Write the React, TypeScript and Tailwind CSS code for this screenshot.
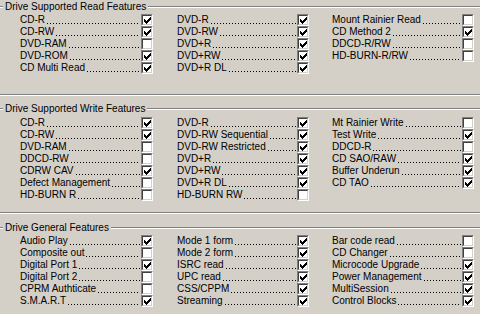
import React from 'react'

type Item = [string, boolean]

const groups: { title: string; top: string; rowsTop: string; pad: string; cols: Item[][] }[] = [
  {
    title: 'Drive Supported Read Features',
    top: 'mt-0',
    rowsTop: 'mt-0',
    pad: 'pb-[20px]',
    cols: [
      [['CD-R', true], ['CD-RW', true], ['DVD-RAM', false], ['DVD-ROM', true], ['CD Multi Read', true]],
      [['DVD-R', true], ['DVD-RW', true], ['DVD+R', true], ['DVD+RW', true], ['DVD+R DL', true]],
      [['Mount Rainier Read', false], ['CD Method 2', true], ['DDCD-R/RW', false], ['HD-BURN-R/RW', false]],
    ],
  },
  {
    title: 'Drive Supported Write Features',
    top: 'mt-[6px]',
    rowsTop: 'mt-[1px]',
    pad: 'pb-[11px]',
    cols: [
      [['CD-R', true], ['CD-RW', true], ['DVD-RAM', false], ['DDCD-RW', false], ['CDRW CAV', true], ['Defect Management', false], ['HD-BURN R', false]],
      [['DVD-R', true], ['DVD-RW Sequential', true], ['DVD-RW Restricted', true], ['DVD+R', true], ['DVD+RW', true], ['DVD+R DL', true], ['HD-BURN RW', false]],
      [['Mt Rainier Write', false], ['Test Write', true], ['DDCD-R', false], ['CD SAO/RAW', true], ['Buffer Underun', true], ['CD TAO', true]],
    ],
  },
  {
    title: 'Drive General Features',
    top: 'mt-[7px]',
    rowsTop: 'mt-0',
    pad: 'pb-[11px]',
    cols: [
      [['Audio Play', true], ['Composite out', false], ['Digital Port 1', true], ['Digital Port 2', false], ['CPRM Authticate', false], ['S.M.A.R.T', true]],
      [['Mode 1 form', true], ['Mode 2 form', true], ['ISRC read', true], ['UPC read', true], ['CSS/CPPM', true], ['Streaming', true]],
      [['Bar code read', false], ['CD Changer', false], ['Microcode Upgrade', true], ['Power Management', true], ['MultiSession', true], ['Control Blocks', true]],
    ],
  },
]

const colClass = ['w-[133px]', 'ml-[24px] w-[132px]', 'ml-[23px] w-[142px]']

// classic 7x7 check bitmap
const checkPixels = ['......#', '.....##', '#...###', '##.###.', '#####..', '.###...', '..#....']

const Etched = ({ className = '' }: { className?: string }) => (
  <div className={`h-[2px] border-t border-b border-t-[#808080] border-b-white ${className}`} />
)

const CheckBox = ({ checked }: { checked: boolean }) => (
  <div className="w-[12px] h-[12px] shrink-0 border-t border-l border-t-[#808080] border-l-[#808080] border-b border-r border-b-white border-r-white">
    <div className="w-full h-full bg-white border-t border-l border-t-[#404040] border-l-[#404040] border-b border-r border-b-[#d4d0c8] border-r-[#d4d0c8] flex items-center justify-center">
      {checked && (
        <svg width="7" height="7" viewBox="0 0 7 7" shapeRendering="crispEdges">
          {checkPixels.flatMap((row, y) =>
            row.split('').map((c, x) => (c === '#' ? <rect key={`${x}-${y}`} x={x} y={y} width="1" height="1" fill="#000" /> : null)),
          )}
        </svg>
      )}
    </div>
  </div>
)

const Row = ({ label, checked }: { label: string; checked: boolean }) => (
  <div className="flex items-center h-[12px]">
    <span className="whitespace-nowrap">{label}</span>
    {/* dotted leader */}
    <div className="flex-1 self-end mb-[2px] ml-[2px] mr-[1px] h-[1px] bg-[linear-gradient(to_right,#000_1px,transparent_1px)] bg-[length:3px_1px] bg-repeat-x" />
    <CheckBox checked={checked} />
  </div>
)

export default function App() {
  return (
    <div className="h-screen overflow-hidden bg-[#d4d0c8] text-black text-[10px] leading-[12px] font-['Liberation_Sans',Arial,sans-serif]">
      {groups.map((g) => (
        <div key={g.title} className={g.top}>
          {/* Group title */}
          <div className="flex items-center h-[14px]">
            <Etched className="w-[3px]" />
            <span className="px-[2px] whitespace-nowrap">{g.title}</span>
            <Etched className="flex-1" />
          </div>
          <div className={`flex pl-[20px] ${g.rowsTop} ${g.pad}`}>
            {g.cols.map((col, i) => (
              <div key={i} className={colClass[i]}>
                {col.map(([label, checked]) => (
                  <Row key={label} label={label} checked={checked} />
                ))}
              </div>
            ))}
          </div>
          <Etched />
        </div>
      ))}
    </div>
  )
}
